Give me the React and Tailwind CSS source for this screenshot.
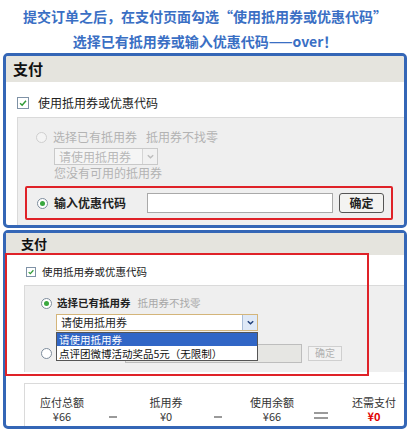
const FONT = "font-['Noto_Sans_CJK_SC','Noto_Sans',sans-serif]";

function CheckBox({ className }) {
  return (
    <span className={`flex items-center justify-center bg-white border border-[#7f92a6] shrink-0 ${className}`}>
      <svg viewBox="0 0 12 12" className="w-full h-full">
        <path d="M2.5 6.2 L5 8.6 L9.6 3.4" fill="none" stroke="#2f9a35" strokeWidth="1.8" />
      </svg>
    </span>
  );
}

function Radio({ checked, disabled }) {
  return (
    <span
      className={`flex items-center justify-center w-[11px] h-[11px] rounded-full border shrink-0 ${
        disabled ? 'border-[#cfcfcf] bg-[#f4f4f4]' : 'border-[#7d8c9c] bg-white'
      }`}
    >
      {checked && <span className="w-[5px] h-[5px] rounded-full bg-[#3aa83f]" />}
    </span>
  );
}

function Chevron({ disabled }) {
  return (
    <span
      className={`flex items-center justify-center w-[15px] h-full border-l ${
        disabled ? 'border-[#d4d4d4] bg-[#f1f1f1]' : 'border-[#a9bdd8] bg-[#dfe9f7]'
      }`}
    >
      <svg viewBox="0 0 10 10" className="w-[9px] h-[9px]">
        <path d="M2 3.5 L5 6.5 L8 3.5" fill="none" stroke={disabled ? '#bdbdbd' : '#1f3f7a'} strokeWidth="1.6" />
      </svg>
    </span>
  );
}

function PanelOne() {
  return (
    <div className="mx-[3px] border-[3px] border-[#3466b6] rounded-[5px] overflow-hidden">
      <div className="h-[26px] bg-[#e5e4de] pl-[7px] text-[15px] leading-[26px] font-bold text-[#111]">支付</div>
      <div className="h-[35px] pt-[7px] pl-[11px] flex items-center gap-[9px] bg-white">
        <CheckBox className="w-[12px] h-[12px]" />
        <span className="text-[12px] text-[#222]">使用抵用券或优惠代码</span>
      </div>
      <div className="ml-[11px] h-[108px] bg-[#efefef] border-t border-l border-[#dadada] pt-[11px]">
        <div className="flex items-center h-[16px] pl-[18px] gap-[6px] text-[12px] text-[#b3b3b3]">
          <Radio disabled />
          <span>选择已有抵用券</span>
          <span className="ml-[3px]">抵用券不找零</span>
        </div>
        <div className="ml-[36px] mt-[3px] flex w-[104px] h-[17px] border border-[#c9c9c9] bg-[#f5f5f5]">
          <span className="flex-1 pl-[4px] text-[12px] leading-[15px] text-[#b8b8b8]">请使用抵用券</span>
          <Chevron disabled />
        </div>
        <div className="ml-[36px] h-[16px] text-[12px] leading-[16px] text-[#b3b3b3]">您没有可用的抵用券</div>
        <div className="ml-[7px] mr-[11px] mt-[5px] h-[34px] border-2 border-[#df2228] rounded-[2px] flex items-center pl-[10px]">
          <Radio checked />
          <span className="ml-[6px] w-[93px] text-[12px] font-bold text-[#222]">输入优惠代码</span>
          <span className="w-[186px] h-[20px] bg-white border border-[#a9a9a9]" />
          <button className="ml-[6px] w-[45px] h-[20px] rounded-[3px] border border-[#555] bg-[#f3f3f1] text-[12px] font-bold leading-none text-[#222]">
            确定
          </button>
        </div>
      </div>
    </div>
  );
}

function Amount({ label, value, red }) {
  return (
    <div className="w-[60px] text-center text-[11px] leading-[14px] text-[#333]">
      <div className="h-[14px]">{label}</div>
      <div className={`h-[14px] ${red ? 'text-[#e00000] font-bold' : ''}`}>{value}</div>
    </div>
  );
}

function Minus() {
  return (
    <div className="w-[20px] h-[28px] flex items-end justify-center pb-[5px]">
      <span className="w-[8px] h-[2px] bg-[#9a9a9a]" />
    </div>
  );
}

function PanelTwo() {
  return (
    <div className="relative mx-[3px] mt-[2px] border-[3px] border-[#3466b6] rounded-[5px]">
      <div className="h-[22px] bg-[#e5e4de] pl-[15px] text-[13px] leading-[22px] font-bold text-[#111]">支付</div>
      <div className="h-[30px] pt-[3px] pl-[20px] flex items-center gap-[6px] bg-white">
        <CheckBox className="w-[10px] h-[10px]" />
        <span className="text-[10.5px] text-[#222]">使用抵用券或优惠代码</span>
      </div>
      <div className="relative ml-[18px] h-[87px] bg-[#efefef] border-t border-l border-[#dadada] pt-[9px]">
        <div className="flex items-center h-[16px] pl-[16px] text-[10.5px]">
          <Radio checked />
          <span className="ml-[5px] font-bold text-[#222]">选择已有抵用券</span>
          <span className="ml-[7px] text-[#a8a8a8]">抵用券不找零</span>
        </div>
        <div className="ml-[31px] mt-[3px] flex w-[202px] h-[17px] border border-[#d4b57a] bg-white">
          <span className="flex-1 pl-[4px] text-[11px] leading-[15px] text-[#222]">请使用抵用券</span>
          <Chevron />
        </div>
        <div className="mt-[12px] flex items-center h-[20px] pl-[16px]">
          <Radio />
          <span className="ml-[73px] w-[177px] h-[19px] bg-[#e6e6e3] border border-[#bdbdbd]" />
          <button className="ml-[6px] w-[34px] h-[15px] border border-[#cfcfcf] bg-[#f2f2f2] text-[10px] leading-none text-[#b0b0b0]">
            确定
          </button>
        </div>
        <div className="absolute left-[31px] top-[46px] w-[202px] border border-[#555] bg-white text-[10.5px] leading-[13px]">
          <div className="h-[13px] bg-[#3166c6] pl-[2px] text-white overflow-hidden">请使用抵用券</div>
          <div className="h-[14px] pl-[2px] pt-[1px] text-[#111] overflow-hidden">点评团微博活动奖品5元（无限制）</div>
        </div>
      </div>
      <div className="ml-[18px] mt-[11px] h-[43px] border-t border-l border-[#dadada] pt-[11px] flex">
        <div className="ml-[7px]"><Amount label="应付总额" value="¥66" /></div>
        <div className="ml-[11px]"><Minus /></div>
        <div className="ml-[13px]"><Amount label="抵用券" value="¥0" /></div>
        <div className="ml-[12px]"><Minus /></div>
        <div className="ml-[14px]"><Amount label="使用余额" value="¥66" /></div>
        <div className="ml-[9px] w-[20px] h-[28px] flex flex-col items-center justify-end gap-[3px] pb-[4px]">
          <span className="w-[14px] h-[2px] bg-[#9a9a9a]" />
          <span className="w-[14px] h-[2px] bg-[#9a9a9a]" />
        </div>
        <div className="ml-[14px]"><Amount label="还需支付" value="¥0" red /></div>
      </div>
      <div className="pointer-events-none absolute left-[-1px] top-[20px] w-[364px] h-[123px] border-2 border-[#df2228]" />
    </div>
  );
}

export default function App() {
  return (
    <div className={`w-[410px] h-[438px] bg-white overflow-hidden ${FONT}`}>
      <div className="h-[53px] pt-[4px] text-center text-[14px] leading-[25px] font-bold text-[#3a6fc4]">
        <div>提交订单之后，在支付页面勾选“使用抵用券或优惠代码”</div>
        <div>选择已有抵用券或输入优惠代码——over！</div>
      </div>
      <PanelOne />
      <PanelTwo />
    </div>
  );
}
